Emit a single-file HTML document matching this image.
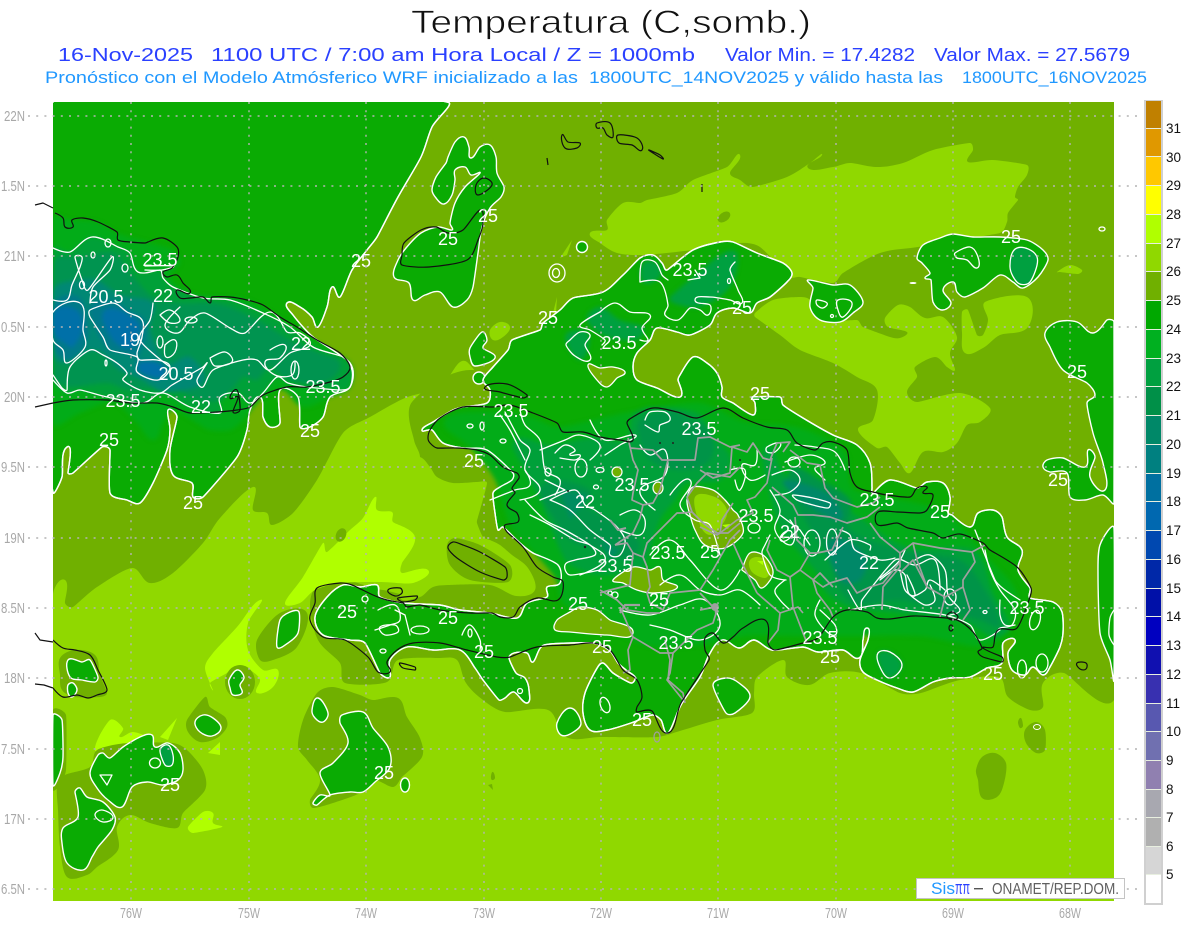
<!DOCTYPE html>
<html lang="es"><head><meta charset="utf-8"><title>Temperatura (C,somb.)</title>
<style>
html,body{margin:0;padding:0;background:#fff}
svg{display:block}
text{font-family:"Liberation Sans",sans-serif}
.c{fill:#0aab03;stroke:#fff;stroke-width:1.4;stroke-linejoin:round}
.nf{fill:none;stroke:#fff;stroke-width:1.3;stroke-linejoin:round;stroke-linecap:round}
.o{fill:#70b000}.l{fill:#90d800}.y{fill:#b0ff00}
.k{fill:none;stroke:#111;stroke-width:1.2;stroke-linejoin:round}
.g{fill:none;stroke:#a0a0a0;stroke-width:1.7;stroke-linejoin:round}
.lab text{fill:#fff;font-size:18px;text-anchor:middle;stroke:none}
.ax text{fill:#a8a8a8;font-size:14.5px}
.cb text{fill:#111;font-size:13.5px}
</style></head><body>
<svg xmlns="http://www.w3.org/2000/svg" width="1200" height="927" viewBox="0 0 1200 927">
<defs><filter id="b" x="-5%" y="-5%" width="110%" height="110%" color-interpolation-filters="sRGB"><feGaussianBlur stdDeviation="2.2"/></filter></defs>
<rect width="1200" height="927" fill="#fff"/>
<text x="411" y="33" font-size="32" textLength="400" lengthAdjust="spacingAndGlyphs" fill="#111" stroke="#fff" stroke-width=".7">Temperatura (C,somb.)</text>
<g fill="#2a40ff" font-size="18">
<text x="58" y="61" textLength="135" lengthAdjust="spacingAndGlyphs">16-Nov-2025</text>
<text x="211" y="61" textLength="484" lengthAdjust="spacingAndGlyphs">1100 UTC / 7:00 am Hora Local / Z = 1000mb</text>
<text x="725" y="61" textLength="190" lengthAdjust="spacingAndGlyphs">Valor Min. = 17.4282</text>
<text x="934" y="61" textLength="196" lengthAdjust="spacingAndGlyphs">Valor Max. = 27.5679</text>
</g>
<g fill="#2098ff" font-size="17">
<text x="45" y="83" textLength="533" lengthAdjust="spacingAndGlyphs">Pronóstico con el Modelo Atmósferico WRF inicializado a las</text>
<text x="589" y="83" textLength="354" lengthAdjust="spacingAndGlyphs">1800UTC_14NOV2025 y válido hasta las</text>
<text x="962" y="83" textLength="185" lengthAdjust="spacingAndGlyphs">1800UTC_16NOV2025</text>
</g>
<svg x="53" y="102" width="1061" height="799" viewBox="53 102 1061 799">
<defs>
<polygon id="g1" points="53,102 447,102 432,127 421,157 398,197 377,237 367,250 352,270 340,297 332,287 327,307 318,327 312,317 300,307 287,303 293,315 313,337 350,363 350,387 330,397 323,417 310,427 300,427 298,397 280,390 280,423 270,427 263,417 260,397 250,410 247,430 237,457 203,497 193,497 192,483 173,475 170,450 177,417 168,410 170,430 167,450 153,483 140,503 127,500 110,493 110,450 102,447 73,473 68,473 67,447 62,477 53,492"/>
<polygon id="g2" points="493,367 508,350 512,340 540,330 543,323 560,310 573,298 603,292 623,275 640,258 653,255 662,263 667,270 693,250 720,242 733,242 757,253 783,263 792,273 787,282 770,297 757,303 750,313 733,308 717,313 710,325 690,335 677,332 657,328 650,340 637,353 633,367 637,380 657,388 680,397 678,380 680,375 693,357 707,363 717,373 722,387 722,397 733,403 753,415 755,403 752,397 780,397 783,405 803,418 833,435 857,445 870,463 872,487 873,493 890,480 917,488 927,482 943,483 950,497 948,513 952,515 970,527 978,513 993,510 1002,517 1007,537 1022,550 1018,570 1030,588 1030,598 1053,602 1062,612 1063,633 1060,647 1050,667 1043,675 1033,667 1025,675 1012,670 1008,653 1015,640 1003,643 1002,663 987,668 970,677 950,678 933,682 913,692 897,688 877,680 863,672 860,660 868,640 867,628 863,640 859,658 843,650 818,652 803,647 772,650 754,640 739,648 722,640 709,655 700,677 681,705 668,733 661,720 652,715 631,723 607,730 590,730 583,713 585,693 596,670 603,663 613,673 631,683 635,677 626,670 618,663 609,650 592,643 544,645 533,662 527,653 514,653 509,658 516,673 525,678 529,690 527,703 514,692 505,698 499,700 483,680 475,668 460,650 433,650 407,647 390,660 390,677 380,673 365,643 350,640 323,635 315,617 327,597 343,585 360,587 377,585 380,597 403,603 440,605 460,610 490,613 517,618 527,603 547,597 547,587 560,583 558,565 533,553 520,543 503,527 498,530 495,513 493,493 500,487 512,480 513,473 487,450 463,448 443,443 432,430 422,430 433,422 453,410 463,407 487,403 490,390 483,380"/>
</defs>
<rect x="53" y="102" width="1061" height="799" fill="#70b000"/>
<polygon class="l" points="53,595 65,580 65,603 73,607 97,587 132,568 150,583 173,573 203,543 220,518 253,487 253,510 267,513 272,525 293,513 317,480 343,433 370,417 405,398 440,387 467,362 600,500 1000,650 1114,698 1114,901 53,901"/>
<polygon class="o" points="470,370 412,402 414,440 420,457 420,590 383,590 345,580 318,585 310,605 318,640 340,663 345,683 387,682 398,660 440,658 457,660 466,683 483,700 505,712 548,710 566,737 600,737 657,737 683,730 717,720 752,713 754,693 757,677 783,660 787,677 809,685 830,673 861,673 900,693 921,693 960,680 999,677 1008,697 1030,710 1043,707 1043,683 1064,673 1114,700 1114,600 1000,400"/>
<polygon class="l" points="400,457 420,457 430,467 437,477 453,483 477,482 487,483 478,517 477,523 483,537 490,540 500,545 512,555 528,568 535,590 516,596 490,585 450,585 433,587 420,597 400,597"/>
<polygon class="o" points="447,545 455,538 480,545 510,565 508,582 470,580 450,565"/>
<polygon class="y" points="285,603 303,577 323,543 327,552 350,530 363,518 375,497 377,510 392,512 393,522 415,537 402,563 402,573 428,570 413,583 380,582 340,583 315,590 300,603"/>
<polygon class="y" points="205,668 213,653 237,627 260,600 248,623 248,650 263,670 278,670 273,687 257,693 260,680 253,672 240,665 227,673 210,683 213,690"/>
<polygon class="y" points="95,750 110,720 123,728 120,737 133,732 150,738 155,745 115,748"/>
<polygon class="y" points="160,737 177,718 168,740"/><polygon class="y" points="208,753 220,742 220,755"/>
<polygon class="y" points="188,827 203,812 213,813 213,823 222,827 193,833"/>
<ellipse class="o" cx="341" cy="535" rx="5" ry="7" transform="rotate(25 341 535)"/>
<polygon class="o" points="60,658 75,650 95,655 100,675 107,693 100,697 75,697 62,690 60,675"/>
<polygon class="o" points="53,710 66,715 66,770 60,785 53,790"/>
<polygon class="o" points="65,775 90,767 97,750 127,743 173,743 187,750 203,770 205,790 183,813 177,828 150,823 130,815 117,827 118,850 97,867 87,875 67,877 60,847 58,810 57,787"/>
<polygon class="o" points="187,720 205,697 210,707 225,717 227,727 217,738 200,742 188,732"/>
<ellipse class="o" cx="240" cy="682" rx="15" ry="17"/>
<polygon class="o" points="257,640 280,613 307,613 297,647 273,660 260,660"/>
<polygon class="o" points="298,747 303,720 317,693 333,687 360,695 373,700 398,698 407,717 420,738 422,757 402,777 393,787 373,780 360,793 333,803 313,808 310,800 320,780 307,760"/>
<polygon class="o" points="976,770 982,757 995,753 1006,763 1004,783 997,797 982,798 978,780"/>
<polygon class="o" points="1025,730 1036,722 1045,730 1045,750 1036,753 1026,743"/>
<polygon class="o" points="1018,722 1021,718 1023,726 1020,728"/>
<polygon class="o" points="491,776 493,772 495,778 492,780"/><polygon class="o" points="488,785 492,784 493,790"/>
<polygon class="l" points="590,233 607,230 607,220 623,203 640,203 647,200 677,193 693,180 727,167 740,155 730,173 740,180 752,187 787,177 810,163 822,155 808,168 833,167 850,163 877,167 903,163 933,150 970,143 973,150 968,162 993,160 1027,165 1027,175 1018,187 1015,197 1018,200 1008,213 1007,222 1000,233 918,247 880,253 843,273 833,283 800,277 790,277 760,247 740,243 693,250 643,255 617,253 600,243"/>
<ellipse class="o" cx="724" cy="217" rx="7" ry="4.5" transform="rotate(-35 724 217)"/>
<polygon class="l" points="800,297 810,300 820,320 857,320 863,327 890,337 900,338 907,332 888,327 885,318 898,305 910,307 925,318 943,317 957,337 950,353 955,370 947,367 935,357 915,367 917,377 907,392 917,402 960,393 990,408 980,422 967,425 957,443 943,452 923,452 910,473 900,463 887,447 877,448 858,430 873,420 877,390 857,377 833,363 800,350 780,335 755,317 755,313 773,300"/>
<polygon class="l" points="985,302 1027,297 1028,327 1000,335 983,348 965,353 962,333 962,312 968,310 977,335 983,335 988,320"/>
<polygon class="l" points="1057,272 1070,265 1082,270 1078,274 1060,272"/>
<polygon class="l" points="490,330 500,322 510,327 503,337 493,340"/>
<polygon class="l" points="553,313 557,297 556,313"/><polygon class="l" points="560,258 572,240 567,255"/>
<!-- Cuba -->
<use href="#g1" class="c"/>
<g filter="url(#b)">
<polygon points="53,217 70,220 97,222 117,233 147,242 173,250 180,263 170,277 190,293 217,297 247,300 283,320 313,340 350,363 350,387 330,397 303,407 283,390 263,397 243,420 230,430 210,430 197,423 173,410 163,423 153,440 137,423 113,403 80,413 53,423" fill="#02ac18"/>
<polygon id="cu2" points="53,248 70,252 92,237 118,247 130,253 138,272 160,270 163,278 173,287 203,298 230,300 263,313 290,327 313,347 343,357 352,370 350,387 340,390 307,387 288,383 277,377 263,393 250,403 238,393 220,397 220,413 190,407 163,393 143,403 107,397 80,390 67,393 53,380" fill="#00a038"/>
<polygon points="53,262 80,257 113,253 130,273 153,297 177,303 207,303 230,307 263,323 290,340 320,353 340,363 330,380 307,383 283,377 270,367 257,380 243,377 220,400 193,397 170,387 130,390 107,383 70,387 53,377" fill="#009450"/>
<polygon points="53,290 77,280 97,280 120,295 153,303 150,330 167,363 190,357 203,383 163,392 143,380 120,370 95,350 67,363 53,355" fill="#008874"/>
<polygon points="53,303 80,298 88,337 70,360 53,345" fill="#007a88"/>
<polygon points="90,307 113,300 127,310 145,320 145,340 140,360 160,362 168,372 158,380 137,372 135,357 110,350 100,337" fill="#007a88"/>
<polygon points="55,310 77,310 82,330 73,347 65,343 55,335" fill="#0070a8"/><polygon points="105,310 138,322 132,347 113,340" fill="#0070a8"/><polygon points="140,362 157,362 165,372 158,378 140,372" fill="#0070a8"/>
</g>
<use href="#g1" class="nf" style="stroke-width:1.4"/>
<polyline class="nf" points="53,248 70,252 92,237 118,247 130,253 138,272 160,270 163,278 173,287 203,298 230,300 263,313 290,327 313,347 343,357 352,370 350,387 340,390 307,387 288,383 277,377 263,393 250,403 238,393 220,397 220,413 190,407 163,393 143,403 107,397 80,390 67,393 53,380"/>
<polygon class="nf" points="53,312 80,303 83,330 85,347 67,363 63,350 53,340"/>
<polygon class="nf" points="90,310 113,303 127,312 142,320 142,337 137,353 140,360 157,360 170,367 158,380 137,372 137,357 110,350 103,337 90,317"/>
<polyline class="nf" points="53,375 62,388 67,390 70,367 90,350 103,355 117,363 127,373 123,380 140,390 160,393 172,385 203,367 207,363 197,380 203,387 213,370 243,360 257,360 270,370 290,353 310,345 300,333 287,332 270,312 245,333 230,328 205,313 190,320 178,333 165,325 180,307"/>
<polyline class="nf" points="53,300 67,300 72,285 80,267 82,257 75,257 82,280 88,290 112,257 110,270 93,287 90,303"/>
<polyline class="nf" points="153,303 150,320 140,340 170,367"/>
<polyline class="nf" points="160,315 170,310 180,320 170,323 160,315"/>
<polyline class="nf" points="270,350 285,345 280,358 265,362 275,375 292,375 295,362"/>
<polyline class="nf" points="165,345 175,340 175,352 166,357 165,345"/>
<polyline class="nf" points="210,358 225,352 232,362 215,366 210,358"/>
<ellipse class="nf" cx="108" cy="243" rx="3" ry="4"/><ellipse class="nf" cx="93" cy="255" rx="2" ry="3"/><ellipse class="nf" cx="125" cy="268" rx="3" ry="4"/><ellipse class="nf" cx="82" cy="285" rx="2.5" ry="4"/><ellipse class="nf" cx="191" cy="320" rx="6" ry="3"/><ellipse class="nf" cx="160" cy="342" rx="3" ry="6"/><ellipse class="nf" cx="295" cy="370" rx="4" ry="9"/><ellipse class="nf" cx="106" cy="363" rx="1" ry="3"/>
<polyline class="nf" points="145,266 173,266 162,270 145,270"/>
<!-- lobes Bahamas etc. -->
<polygon class="c" points="436,198 432,190 436,177 446,163 448,157 455,142 464,137 469,147 471,158 480,147 490,145 496,157 497,173 504,187 501,197 490,208 482,227 478,253 473,287 467,300 453,307 440,292 425,295 413,300 409,283 394,277 398,260 406,248 421,233 438,227 452,230 450,223 455,203 465,187 480,173 471,175 465,167 455,170 455,180 452,195 444,204"/>
<polygon class="c" points="470,348 482,332 487,340 483,348 495,358 475,366 470,357"/>
<circle class="c" cx="479" cy="378" r="6"/><circle class="c" cx="582" cy="247" r="5.5"/>
<ellipse class="nf" cx="557" cy="273" rx="8" ry="9"/><ellipse class="nf" cx="556" cy="273" rx="3.5" ry="4.5"/>
<!-- Hispaniola -->
<use href="#g2" class="c"/>
<g filter="url(#b)">
<polygon points="445,420 490,412 530,417 560,427 630,412 700,403 745,422 800,428 845,452 855,490 940,510 985,555 1018,600 990,645 920,636 850,636 800,636 745,636 700,645 645,645 565,605 555,578 530,548 510,525 495,480 470,447" fill="#02ac18"/>
<polygon points="515,440 550,445 590,438 625,440 633,415 653,407 697,413 713,437 730,457 720,480 687,483 675,500 660,520 650,550 640,570 600,575 570,565 560,550 540,500 525,470" fill="#00a03a"/>
<polygon points="767,447 783,473 813,490 853,513 907,547 973,550 993,593 1010,627 993,637 960,620 900,613 850,607 827,593 817,573 800,553 780,527 767,480" fill="#00a03a"/>
<polygon points="540,490 560,480 590,490 585,505 610,520 625,530 640,545 625,560 600,550 570,540 555,520" fill="#009448"/>
<polygon points="640,420 670,410 690,420 710,430 710,460 680,470 650,460 640,440" fill="#009448"/>
<polygon points="790,470 820,480 850,500 850,530 900,550 960,560 985,590 1000,625 980,620 940,610 900,600 860,605 840,590 830,560 800,510" fill="#009448"/>
<polygon points="785,480 830,495 840,520 800,500" fill="#008868"/><polygon points="830,540 865,555 860,580 840,580" fill="#008868"/><polygon points="560,490 590,495 570,520" fill="#008c60"/><polygon points="600,540 620,550 610,560" fill="#008c60"/>
<polygon points="643,263 657,263 660,277 643,282" fill="#00a040"/><polygon points="670,297 717,257 737,253 730,287 700,307 673,303" fill="#00a040"/><polygon points="587,320 600,307 620,320 643,327 637,340 607,337" fill="#00a040"/><polygon points="567,333 587,332 588,350 580,360 568,347" fill="#00a040"/>
<polygon points="878,653 890,652 902,665 890,678 880,667" fill="#00a040"/>
</g>
<use href="#g2" class="nf" style="stroke-width:1.4"/>
<polygon class="nf" points="878,653 890,652 902,665 890,678 880,667"/>
<!-- olive / light holes on land -->
<polygon class="o" stroke="#fff" stroke-width="1.3" points="588,365 600,368 613,367 625,372 617,378 607,387 597,380"/>
<polygon class="o" stroke="#fff" stroke-width="1.3" points="687,500 693,487 713,490 725,500 733,510 738,515 743,533 725,548 705,545 695,530 690,515"/>
<polygon class="l" points="695,497 715,497 727,510 722,525 710,535 700,525"/>
<polygon class="y" points="722,525 730,524 728,529"/>
<polygon class="o" stroke="#fff" stroke-width="1.3" points="743,567 750,553 763,555 772,567 772,577 762,588 755,580 742,570"/>
<polygon class="l" points="750,560 762,558 770,570 765,578 752,572"/><polygon class="y" points="757,561 763,561 763,565"/>
<ellipse class="o" stroke="#fff" stroke-width="1.2" cx="617" cy="472" rx="5" ry="5"/><ellipse class="o" stroke="#fff" stroke-width="1.2" cx="658" cy="488" rx="5" ry="6"/>
<polygon class="o" stroke="#fff" stroke-width="1.3" points="613,580 633,567 650,570 660,567 663,580 677,588 653,593 637,590 623,583"/>
<polygon class="o" stroke="#fff" stroke-width="1.3" points="557,620 570,612 580,607 597,610 610,620 633,633 607,635 570,632 555,630"/>
<!-- islands -->
<polygon class="c" points="808,280 833,285 850,285 863,302 853,313 840,322 820,320 810,307 813,288"/>
<polygon class="c" points="917,258 923,245 940,238 953,234 973,237 1000,237 1027,240 1043,250 1048,260 1038,277 1023,288 1013,282 1000,275 983,288 965,297 957,292 953,282 943,290 951,303 942,310 933,302 931,280 925,278 930,273 922,263"/>
<polygon class="nf" points="955,253 970,247 978,257 977,268 967,260 957,258"/>
<polygon points="1010,267 1017,248 1037,257 1030,282 1018,283" fill="#00a040" stroke="#fff" stroke-width="1.3"/>
<polygon class="nf" points="817,300 827,303 823,308 817,305"/><polygon class="nf" points="838,300 852,303 843,317 838,310"/><circle class="nf" cx="832" cy="316" r="1.5"/>
<ellipse class="nf" cx="1102" cy="229" rx="3" ry="2"/><ellipse fill="#fff" cx="913" cy="283" rx="3.5" ry="1"/>
<polygon class="c" points="1045,333 1057,322 1077,322 1093,333 1107,320 1114,322 1114,503 1103,495 1085,500 1070,497 1067,473 1050,472 1043,467 1047,460 1063,458 1085,467 1088,450 1095,457 1090,477 1105,490 1103,463 1093,433 1087,403 1095,395 1087,383 1063,370 1050,347"/>
<polygon class="c" points="1114,528 1100,545 1098,575 1100,633 1110,660 1114,680"/>
<polyline class="nf" points="1114,610 1110,618 1109,635 1114,645"/>
<polygon class="c" points="557,723 570,708 581,723 572,733 561,735"/>
<polygon class="c" points="713,685 726,678 739,683 750,697 735,713 726,713"/>
<polygon class="c" points="68,660 82,662 90,660 98,677 95,682 82,680 70,677"/>
<polygon class="c" points="68,685 73,683 77,690 72,697 68,693"/>
<polygon class="c" points="53,715 62,720 63,757 60,773 53,785"/>
<polygon class="c" points="195,722 203,715 213,718 221,728 212,736 200,732"/>
<polygon class="c" points="229,680 237,670 244,677 240,685 242,693 233,695 230,688"/>
<polygon class="c" points="280,620 290,612 299,612 298,633 288,643 277,647"/>
<polygon class="c" points="90,773 98,755 103,753 110,758 123,747 140,737 152,735 155,747 168,743 180,753 183,770 178,780 163,785 147,782 132,787 122,807 108,800 97,788"/>
<polygon class="nf" points="100,775 112,775 107,785"/><ellipse class="nf" cx="155" cy="763" rx="5.5" ry="5"/><polygon points="160,750 168,745 173,755 172,765 165,765" fill="#00a040" stroke="#fff" stroke-width="1.3"/>
<polygon class="c" points="75,792 80,788 87,797 103,802 115,817 112,830 98,847 92,857 83,870 67,863 62,843 63,828 78,817"/>
<polygon class="nf" points="95,815 102,810 113,817 103,822"/>
<polygon class="c" points="312,710 318,698 328,713 323,722 315,718"/>
<polygon class="c" points="342,715 363,712 373,728 388,747 390,767 375,782 363,792 350,792 330,795 317,805 313,803 320,795 330,795 320,773 333,763 348,743 340,723"/>
<ellipse class="c" cx="405" cy="785" rx="4.5" ry="7"/>
<ellipse class="o" stroke="#fff" stroke-width="1" cx="1037" cy="727" rx="3.5" ry="2.5"/>
<!-- white inner contours Hispaniola -->
<g>
<polygon class="nf" points="570,340 580,332 590,335 585,345 590,360 575,356 566,345"/>
<polyline class="nf" points="600,312 615,303 630,312 650,315 642,328 648,340 640,340"/>
<polyline class="nf" points="600,312 580,325 590,330 605,340 602,345"/>
<polyline class="nf" points="640,282 642,262 655,262 662,275 668,280"/>
<polyline class="nf" points="640,282 660,282 668,305 665,315 678,320 690,308 700,310 708,315 710,305 695,300 710,297 730,300 742,303 738,290 730,270 735,262"/>
<polyline class="nf" points="688,280 700,278 695,270"/>
<ellipse class="nf" cx="729" cy="281" rx="1.5" ry="2.5"/>
<polyline class="nf" points="520,410 525,425 540,440 545,470 560,480 555,495"/>
<polyline class="nf" points="505,412 520,440 530,450 525,470 540,490 520,500"/>
<polyline class="nf" points="525,500 545,520 565,530 590,545 605,560 580,575"/>
<polyline class="nf" points="540,450 565,440 580,435 600,445 590,460"/>
<polyline class="nf" points="555,453 565,445 575,450 570,455 580,455 575,460 560,458"/>
<polyline class="nf" points="550,500 575,490 585,505 595,510 615,525 625,540 620,555 610,555 610,545 590,530 570,510 550,500"/>
<polyline class="nf" points="530,515 550,525 575,540 590,545 595,555 575,560 565,565 570,575 600,570"/>
<polyline class="nf" points="590,420 605,440 635,435 620,445 605,455"/>
<ellipse class="nf" cx="581" cy="468" rx="6" ry="9"/><ellipse class="nf" cx="548" cy="472" rx="3" ry="4"/><ellipse class="nf" cx="600" cy="470" rx="4" ry="2.5"/><ellipse class="nf" cx="470" cy="426" rx="3" ry="2"/><ellipse class="nf" cx="482" cy="426" rx="2" ry="4"/><ellipse class="nf" cx="503" cy="441" rx="3" ry="2"/><ellipse class="nf" cx="596" cy="487" rx="2.5" ry="2"/>
<polyline class="nf" points="500,415 510,430 520,450 525,460"/>
<polyline class="nf" points="490,500 515,490 530,485 525,470"/>
<polyline class="nf" points="545,480 565,490 540,500"/>
<polyline class="nf" points="645,420 650,412 665,412 670,420 660,425 658,432 645,425"/>
<polyline class="nf" points="620,515 635,510 645,520 640,535 620,530"/>
<polyline class="nf" points="640,445 650,455 665,450 665,475 640,490 655,510"/>
<polyline class="nf" points="670,495 690,480 680,505 695,520 710,525 720,555"/>
<polyline class="nf" points="650,555 670,540 690,560 720,590 740,570"/>
<polyline class="nf" points="660,585 680,575 700,590 720,595 740,590 760,605"/>
<polyline class="nf" points="620,610 650,615 680,605 705,600 720,625 700,640 670,630 650,625"/>
<polyline class="nf" points="730,470 745,470 740,490 735,480"/><polyline class="nf" points="757,450 755,465 742,465 750,480 765,475"/>
<polyline class="nf" points="772,475 790,470 800,480 790,492 775,495"/>
<polyline class="nf" points="770,490 780,510 775,530 790,545 795,530 790,520"/>
<polygon class="nf" points="793,495 813,498 830,503 828,508 813,505 797,500"/>
<ellipse class="nf" cx="832" cy="542" rx="5.5" ry="13"/><ellipse class="nf" cx="812" cy="543" rx="8" ry="13"/>
<polyline class="nf" points="795,445 815,447 835,452 845,470"/>
<polyline class="nf" points="785,462 810,455 825,462 815,468 820,475 825,480"/>
<polygon class="nf" points="767,447 780,443 775,452 767,452"/>
<ellipse class="nf" cx="794" cy="462" rx="6" ry="5"/>
<polyline class="nf" points="780,515 800,530 810,545"/>
<ellipse class="nf" cx="754" cy="528" rx="6" ry="5"/>
<ellipse class="nf" cx="786" cy="536" rx="7" ry="4" transform="rotate(-40 786 536)"/>
<polyline class="nf" points="770,535 765,545 762,553 770,575 786,580"/>
<polyline class="nf" points="840,530 850,535 855,550 880,560 895,558"/>
<polyline class="nf" points="825,560 850,540 870,545 870,550"/>
<polyline class="nf" points="848,590 860,610 862,600 895,560 915,565 935,560 940,590"/>
<polyline class="nf" points="880,580 895,570 905,575 910,595 925,590 930,580 945,590"/>
<polyline class="nf" points="915,560 930,555 945,570 948,595 960,610 950,615"/>
<polyline class="nf" points="900,570 905,590 915,595 907,575"/>
<polyline class="nf" points="910,595 925,605 935,600 930,585"/>
<ellipse class="nf" cx="950" cy="597" rx="6" ry="8"/>
<polyline class="nf" points="820,610 835,625 835,635 825,630 815,615 820,600"/>
<polyline class="nf" points="790,610 780,600 775,590 785,580"/>
<polyline class="nf" points="850,610 880,605 905,610 945,615 970,625 980,640 1000,630"/>
<polyline class="nf" points="975,530 995,580 1005,590 1020,600"/>
<polyline class="nf" points="985,550 990,570 1000,590 1015,610 1012,625 1000,628 995,635"/>
<polyline class="nf" points="1000,600 1000,615 1005,625 1015,625"/>
<ellipse class="nf" cx="1035" cy="620" rx="5" ry="10" transform="rotate(15 1035 620)"/><ellipse class="nf" cx="1022" cy="669" rx="4.5" ry="9"/><ellipse class="nf" cx="1042" cy="663" rx="6" ry="9"/><ellipse class="nf" cx="985" cy="612" rx="2" ry="1.5"/>
<polyline class="nf" points="880,578 890,570 900,560 905,550"/>
<ellipse class="nf" cx="615" cy="595" rx="3" ry="3"/><ellipse class="nf" cx="630" cy="558" rx="3" ry="2"/>
<ellipse class="nf" cx="470" cy="633" rx="2" ry="4"/><ellipse class="nf" cx="365" cy="599" rx="3" ry="3"/>
<polyline class="nf" points="378,610 395,605 400,620 390,625 375,630"/>
<polygon class="nf" points="380,627 395,625 398,632 385,635"/>
<ellipse class="nf" cx="420" cy="630" rx="9" ry="4"/>
<polyline class="nf" points="410,635 405,615 395,610"/>
<polyline class="nf" points="462,635 470,625 480,640 480,650"/>
<ellipse class="nf" cx="383" cy="651" rx="3" ry="2"/>
<ellipse class="nf" cx="605" cy="705" rx="4.5" ry="8" transform="rotate(-20 605 705)"/>
<circle class="nf" cx="520" cy="691" r="2.5"/><circle class="nf" cx="610" cy="593" r="2"/>
</g>
<!-- grey province lines -->
<g class="g">
<polyline points="630,448 653,450 662,460 668,460 695,460 698,438 710,437 730,447 740,445"/>
<polyline points="628,438 633,460 638,470 633,493 632,500 643,505 640,518 633,533 615,545"/>
<polyline points="668,460 660,490 653,503 643,505"/>
<polyline points="615,545 627,543 633,553 643,557 647,543 660,530 677,513 683,513 692,512 687,497 697,483 707,473 730,477 740,467"/>
<polyline points="643,557 647,567 650,587 647,593 650,603 663,610 670,593 700,590 713,570 730,540 740,530"/>
<polyline points="692,512 703,523 717,533 728,533 740,523"/>
<polyline points="633,553 630,585 610,590 600,593"/>
<polyline points="600,590 617,600 627,610 647,613 660,613"/>
<polyline points="620,607 633,637 628,650 630,670 623,673"/>
<polyline points="633,637 660,653 673,653 670,673 667,680 683,700"/>
<polyline points="700,593 713,607 717,610 713,623 697,630 673,653"/>
<polyline points="665,640 670,660 668,680 683,693 685,703"/>
<polyline points="700,470 713,478 730,473 732,447 747,452 753,443 763,458 770,460 777,443 790,442 783,452"/>
<polyline points="772,458 767,483 755,497 747,500 753,513 737,520 720,533 717,535 700,527"/>
<polyline points="790,450 807,463 820,465 825,488 833,498 857,507 873,503 880,497"/>
<polyline points="772,487 793,505 798,515 813,515 830,517 847,523 867,517 880,507"/>
<polyline points="795,517 797,540 810,553 817,553 832,550 843,527"/>
<polyline points="870,523 880,537 900,553 913,543 940,548 972,552 985,545"/>
<polyline points="972,552 975,562 963,580 963,587 970,610 963,620"/>
<polyline points="810,553 800,570 790,577 777,570 767,550 770,540"/>
<polyline points="800,570 823,587 830,583 847,578 857,593 870,587 883,583 900,562"/>
<polyline points="900,553 900,567 883,587 882,610"/>
<polyline points="900,573 913,560 927,587 945,597 940,617"/>
<polyline points="913,543 917,560 927,587"/>
<polyline points="963,587 945,597"/>
<polyline points="790,577 793,607 803,633 807,643"/>
<polyline points="757,593 780,613 778,630 768,643"/>
<polyline points="733,543 742,563 757,593"/>
<polyline points="780,613 798,607 803,613"/>
<polyline points="833,587 820,573 813,580 817,593 830,610 833,617"/>
<polyline points="733,503 722,520 720,533"/>
<polyline points="700,610 715,607 716,615"/>
<circle cx="715" cy="607" r="3" fill="#a0a0a0"/>
<ellipse cx="657" cy="737" rx="3" ry="5" stroke-width="1.2"/>
<polyline points="620,613 625,605 640,605" stroke-width="2.2"/>
<polyline points="610,520 618,530 626,528" stroke-width="2"/>
</g>
<!-- coast -->
<g class="k">
<polygon points="428,438 430,443 437,448 457,448 477,450 490,455 503,467 517,473 519,478 512,488 515,493 507,505 517,513 518,522 505,525 507,532 523,547 537,567 553,577 563,582 558,600 537,598 520,607 513,617 500,617 492,613 470,613 440,610 420,605 407,607 403,603 387,600 373,595 352,585 340,583 317,588 315,603 310,620 323,637 345,640 368,657 378,672 390,672 387,662 397,650 413,643 440,643 467,650 497,657 510,657 537,647 570,645 593,643 610,650 623,670 637,680 642,697 637,707 637,712 652,711 668,733 681,703 709,660 705,650 705,638 713,633 723,643 733,637 743,628 765,620 768,643 775,650 803,643 818,638 833,617 847,610 867,612 877,618 890,619 913,616 933,617 957,620 973,632 982,648 978,652 983,657 1002,662 1002,657 983,648 993,647 998,630 1017,628 1030,597 1031,588 1017,567 990,550 983,543 960,534 943,538 933,533 908,528 897,523 878,525 878,512 897,512 920,513 927,510 933,495 923,493 927,487 917,488 910,497 887,495 873,492 857,487 850,473 847,450 833,442 823,443 815,450 797,443 787,430 767,427 743,418 723,408 697,418 677,412 653,408 633,417 627,423 633,440 620,440 600,437 583,432 563,432 557,423 533,413 510,405 493,407 463,407 440,418 430,430"/>
<polyline points="55,213 63,218 65,227 73,227 72,220 83,218 98,222 117,232 118,240 130,242 145,243 148,242 163,238 177,247 178,257 172,268 163,272 167,277 177,275 183,283 190,293 177,290 180,298 190,298 203,297 210,303 212,297 230,297 247,300 263,305 280,317 297,327 317,340 340,353 350,367 343,377 330,382 307,387 287,387 263,395 250,407 237,410 217,412 190,413 173,407 157,403 130,403 107,400 73,400 53,403"/>
<polygon points="237,390 230,398 238,397 233,412 240,410"/>
<polygon points="448,548 453,542 463,545 480,552 505,567 507,577 503,580 480,572 457,558"/>
<polygon points="485,387 507,384 527,395 523,398 500,392"/>
<polygon points="597,123 610,123 613,137 607,135 603,128 597,128"/>
<polygon points="618,135 637,138 642,150 632,145 619,143"/>
<polygon points="649,150 660,155 663,159 653,153"/>
<polygon points="562,135 568,142 580,143 577,148 565,148"/>
<polyline points="547,158 548,165"/><polyline points="702,184 702,192"/>
<polygon points="476,185 484,178 492,185 478,195"/>
<polygon points="402,255 404,243 421,230 436,227 448,233 463,230 480,210 483,223 478,240 467,260 429,267 402,265"/>
<polyline points="53,640 63,648 75,650 90,655 98,670 107,690 97,695 88,698 77,695 63,697 53,688"/>
<polygon points="947,615 952,612 958,617 953,620 948,618"/><ellipse cx="951" cy="628" rx="2" ry="3"/>
<polygon points="1077,663 1086,663 1086,669 1080,669"/>
<polygon points="400,663 415,667 415,670 403,668"/>
<polygon points="388,590 400,588 402,593 395,596"/><polygon points="398,598 417,596 415,600 403,602"/>
</g>
<g fill="#222"><circle cx="568" cy="491" r="1"/><circle cx="660" cy="443" r="1"/><circle cx="673" cy="443" r="1"/><circle cx="740" cy="460" r="1"/><circle cx="585" cy="547" r="1.2"/></g>
<g class="lab">
<text x="361" y="267">25</text><text x="488" y="222">25</text><text x="448" y="245">25</text><text x="548" y="324">25</text><text x="742" y="314">25</text><text x="1011" y="243">25</text><text x="1077" y="378">25</text><text x="760" y="400">25</text><text x="310" y="437">25</text><text x="109" y="446">25</text><text x="193" y="509">25</text><text x="474" y="467">25</text><text x="1058" y="486">25</text><text x="940" y="518">25</text><text x="710" y="558">25</text><text x="659" y="606">25</text><text x="578" y="610">25</text><text x="347" y="618">25</text><text x="448" y="624">25</text><text x="484" y="658">25</text><text x="602" y="653">25</text><text x="830" y="663">25</text><text x="993" y="680">25</text><text x="642" y="726">25</text><text x="384" y="779">25</text><text x="170" y="791">25</text>
<text x="160" y="266">23.5</text><text x="690" y="276">23.5</text><text x="619" y="349">23.5</text><text x="511" y="417">23.5</text><text x="323" y="393">23.5</text><text x="123" y="407">23.5</text><text x="699" y="435">23.5</text><text x="632" y="491">23.5</text><text x="877" y="506">23.5</text><text x="756" y="522">23.5</text><text x="668" y="559">23.5</text><text x="615" y="572">23.5</text><text x="1027" y="614">23.5</text><text x="820" y="644">23.5</text><text x="676" y="649">23.5</text>
<text x="163" y="302">22</text><text x="301" y="350">22</text><text x="201" y="413">22</text><text x="585" y="508">22</text><text x="869" y="569">22</text><text x="790" y="538">22</text>
<text x="106" y="303">20.5</text><text x="176" y="380">20.5</text><text x="130" y="346">19</text>
</g>
</svg>
<!-- outside coast -->
<g class="k"><polyline points="35,205 43,203 53,208"/><polyline points="35,407 53,403"/><polyline points="35,633 40,640 53,642"/><polyline points="35,684 44,685 53,688"/></g>
<!-- grid -->
<g stroke="#b4b4b4" stroke-width="1.4" stroke-dasharray="2 6.2" fill="none">
<path d="M28 116H1137M28 186H1137M28 256H1137M28 327H1137M28 397H1137M28 467H1137M28 538H1137M28 608H1137M28 678H1137M28 749H1137M28 819H1137M28 889H1137"/>
<path d="M131 102V905M249 102V905M366 102V905M484 102V905M601 102V905M718 102V905M836 102V905M953 102V905M1070 102V905"/>
</g>
<g class="ax">
<text x="4" y="121" textLength="21" lengthAdjust="spacingAndGlyphs">22N</text><text x="1" y="191" textLength="24" lengthAdjust="spacingAndGlyphs">1.5N</text><text x="4" y="261" textLength="21" lengthAdjust="spacingAndGlyphs">21N</text><text x="1" y="332" textLength="24" lengthAdjust="spacingAndGlyphs">0.5N</text><text x="4" y="402" textLength="21" lengthAdjust="spacingAndGlyphs">20N</text><text x="1" y="472" textLength="24" lengthAdjust="spacingAndGlyphs">9.5N</text><text x="4" y="543" textLength="21" lengthAdjust="spacingAndGlyphs">19N</text><text x="1" y="613" textLength="24" lengthAdjust="spacingAndGlyphs">8.5N</text><text x="4" y="683" textLength="21" lengthAdjust="spacingAndGlyphs">18N</text><text x="1" y="754" textLength="24" lengthAdjust="spacingAndGlyphs">7.5N</text><text x="4" y="824" textLength="21" lengthAdjust="spacingAndGlyphs">17N</text><text x="1" y="894" textLength="24" lengthAdjust="spacingAndGlyphs">6.5N</text>
<text x="120" y="918" textLength="22" lengthAdjust="spacingAndGlyphs">76W</text><text x="238" y="918" textLength="22" lengthAdjust="spacingAndGlyphs">75W</text><text x="355" y="918" textLength="22" lengthAdjust="spacingAndGlyphs">74W</text><text x="473" y="918" textLength="22" lengthAdjust="spacingAndGlyphs">73W</text><text x="590" y="918" textLength="22" lengthAdjust="spacingAndGlyphs">72W</text><text x="707" y="918" textLength="22" lengthAdjust="spacingAndGlyphs">71W</text><text x="825" y="918" textLength="22" lengthAdjust="spacingAndGlyphs">70W</text><text x="942" y="918" textLength="22" lengthAdjust="spacingAndGlyphs">69W</text><text x="1059" y="918" textLength="22" lengthAdjust="spacingAndGlyphs">68W</text>
</g>
<!-- stamp -->
<rect x="916.5" y="878.5" width="208" height="20" fill="#fff" stroke="#c4c4c4"/>
<text x="931" y="894" font-size="17" fill="#2098ff" textLength="24" lengthAdjust="spacingAndGlyphs">Sis</text>
<text x="955" y="894" font-size="18" fill="#2a40ff" textLength="15" lengthAdjust="spacingAndGlyphs">ππ</text>
<rect x="974" y="888" width="9" height="1.4" fill="#555"/>
<text x="992" y="894" font-size="16" fill="#606060" textLength="127" lengthAdjust="spacingAndGlyphs">ONAMET/REP.DOM.</text>
<!-- colourbar -->
<rect x="1144" y="100" width="19" height="805" fill="#d0d0d0"/>
<rect x="1146" y="101" width="15" height="802" fill="#e8efe0"/>
<g>
<rect x="1146" y="101" width="15" height="27" fill="#c08000"/>
<rect x="1146" y="129" width="15" height="27" fill="#e09800"/>
<rect x="1146" y="157" width="15" height="28" fill="#ffc800"/>
<rect x="1146" y="186" width="15" height="28" fill="#ffff00"/>
<rect x="1146" y="215" width="15" height="28" fill="#b0ff00"/>
<rect x="1146" y="244" width="15" height="27" fill="#90d800"/>
<rect x="1146" y="272" width="15" height="28" fill="#70b000"/>
<rect x="1146" y="301" width="15" height="28" fill="#00a800"/>
<rect x="1146" y="330" width="15" height="28" fill="#00b020"/>
<rect x="1146" y="359" width="15" height="27" fill="#00a040"/>
<rect x="1146" y="387" width="15" height="28" fill="#009048"/>
<rect x="1146" y="416" width="15" height="28" fill="#008868"/>
<rect x="1146" y="445" width="15" height="28" fill="#008080"/>
<rect x="1146" y="474" width="15" height="27" fill="#0070a0"/>
<rect x="1146" y="502" width="15" height="28" fill="#0068b0"/>
<rect x="1146" y="531" width="15" height="28" fill="#0048b0"/>
<rect x="1146" y="560" width="15" height="28" fill="#0028a8"/>
<rect x="1146" y="589" width="15" height="27" fill="#0010a8"/>
<rect x="1146" y="617" width="15" height="28" fill="#0000c0"/>
<rect x="1146" y="646" width="15" height="28" fill="#1010b0"/>
<rect x="1146" y="675" width="15" height="28" fill="#3830b0"/>
<rect x="1146" y="704" width="15" height="27" fill="#5858b0"/>
<rect x="1146" y="732" width="15" height="28" fill="#7070b0"/>
<rect x="1146" y="761" width="15" height="28" fill="#9080b0"/>
<rect x="1146" y="790" width="15" height="27" fill="#a8a8b0"/>
<rect x="1146" y="818" width="15" height="28" fill="#b0b0b0"/>
<rect x="1146" y="847" width="15" height="27" fill="#d6d6d6"/>
<rect x="1146" y="875" width="15" height="28" fill="#ffffff"/>
</g>
<g class="cb">
<text x="1166" y="133">31</text><text x="1166" y="162">30</text><text x="1166" y="190">29</text><text x="1166" y="219">28</text><text x="1166" y="248">27</text><text x="1166" y="276">26</text><text x="1166" y="305">25</text><text x="1166" y="334">24</text><text x="1166" y="363">23</text><text x="1166" y="391">22</text><text x="1166" y="420">21</text><text x="1166" y="449">20</text><text x="1166" y="478">19</text><text x="1166" y="506">18</text><text x="1166" y="535">17</text><text x="1166" y="564">16</text><text x="1166" y="593">15</text><text x="1166" y="621">14</text><text x="1166" y="650">13</text><text x="1166" y="679">12</text><text x="1166" y="708">11</text><text x="1166" y="736">10</text><text x="1166" y="765">9</text><text x="1166" y="794">8</text><text x="1166" y="822">7</text><text x="1166" y="851">6</text><text x="1166" y="879">5</text>
</g>
</svg>
<script>
(function(){
var ns='http://www.w3.org/2000/svg';
document.querySelectorAll('svg svg polygon, svg svg polyline, svg>g.k polyline').forEach(function(el){
  if(el.closest('.g'))return;
  var n=(el.getAttribute('points')||'').trim().split(/[\s]+/).map(function(s){return s.split(',').map(Number)});
  var closed=el.tagName==='polygon',m=n.length;
  if(m<4)return;
  function at(i){return closed?n[(i+m)%m]:n[Math.max(0,Math.min(m-1,i))]}
  function h(a,b,c){var dx=c[0]-a[0],dy=c[1]-a[1],L=Math.hypot(dx,dy)||1,s=Math.hypot(c[0]-b[0],c[1]-b[1]),s2=Math.hypot(b[0]-a[0],b[1]-a[1]),k=Math.min(s,s2)/3;return [dx/L*k,dy/L*k]}
  var d='M'+n[0][0]+' '+n[0][1],seg=closed?m:m-1;
  for(var i=0;i<seg;i++){
    var p0=at(i-1),p1=at(i),p2=at(i+1),p3=at(i+2),t1=h(p0,p1,p2),t2=h(p1,p2,p3);
    d+='C'+(p1[0]+t1[0]).toFixed(1)+' '+(p1[1]+t1[1]).toFixed(1)+' '+(p2[0]-t2[0]).toFixed(1)+' '+(p2[1]-t2[1]).toFixed(1)+' '+p2[0]+' '+p2[1];
  }
  if(closed)d+='Z';
  var p=document.createElementNS(ns,'path');
  for(var j=0;j<el.attributes.length;j++){var a=el.attributes[j];if(a.name!=='points')p.setAttribute(a.name,a.value)}
  p.setAttribute('d',d);
  el.parentNode.replaceChild(p,el);
});
})();
</script>
</body></html>
